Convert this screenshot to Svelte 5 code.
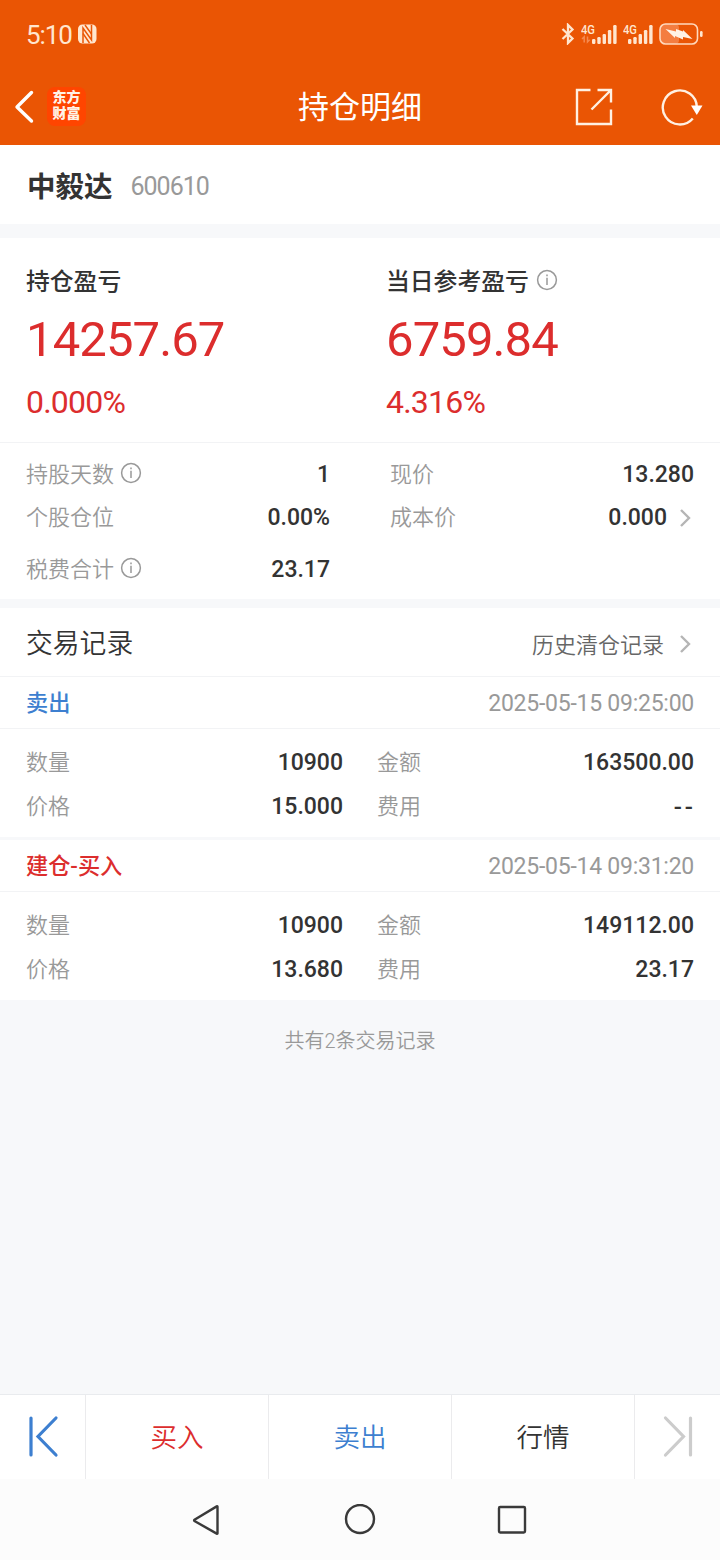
<script>
    let stock = { name: "中毅达", code: "600610" };

    let profits = [
        { label: "持仓盈亏", amount: "14257.67", percent: "0.000%", info: false },
        { label: "当日参考盈亏", amount: "6759.84", percent: "4.316%", info: true }
    ];

    let records = [
        {
            type: "卖出",
            side: "sell",
            time: "2025-05-15 09:25:00",
            count: "10900",
            price: "15.000",
            total: "163500.00",
            fee: "--"
        },
        {
            type: "建仓-买入",
            side: "buy",
            time: "2025-05-14 09:31:20",
            count: "10900",
            price: "13.680",
            total: "149112.00",
            fee: "23.17"
        }
    ];

    const bars = [5, 7, 10, 14, 19];
</script>

{#snippet info()}
    <svg class="info" width="22" height="22" viewBox="0 0 22 22">
        <circle cx="11" cy="11" r="9.4" />
        <path d="M11 8.8V16M11 5.4V7.2" />
    </svg>
{/snippet}

{#snippet chevron()}
    <svg class="chevron" width="12" height="20" viewBox="0 0 12 20">
        <path d="M2 2L10 10L2 18" />
    </svg>
{/snippet}

{#snippet signal(data)}
    <svg class="signal" width={data ? 38 : 32} height="24" viewBox="0 0 {data ? 38 : 32} 24">
        <text x="0" y="12" textLength="14" lengthAdjust="spacingAndGlyphs">4G</text>
        {#if data}
            <path class="data" d="M1 17L3.2 14.8V20.5M6.5 14.5V20L8.7 17.8" />
        {/if}
        {#each bars as h, i}
            <rect x={(data ? 11 : 5) + i * 5.3} y={22 - h} width="3.4" height={h} rx="1.2" />
        {/each}
    </svg>
{/snippet}

<div class="page">
    <header>
        <div class="status">
            <div class="clock">
                <span>5:10</span>
                <svg width="20" height="20" viewBox="0 0 20 20">
                    <rect x="0" y="0.5" width="18.5" height="19" rx="4.5" fill="#ffe6cf" />
                    <path d="M5 19V4L13.5 16V1" fill="none" stroke="#ea5504" stroke-width="1.5" />
                    <path d="M5 9.5L11.500 19M7 1L13.500 10" fill="none" stroke="#ea5504" stroke-width="1.4" />
                </svg>
            </div>
            <div class="device">
                <svg class="bt" width="14" height="22" viewBox="0 0 14 22">
                    <path d="M1.5 6L11.5 15.5L7 20V2L11.5 6.5L1.5 16" />
                </svg>
                {@render signal(true)}
                {@render signal(false)}
                <svg class="battery" width="44" height="22" viewBox="0 0 44 22">
                    <rect x="1" y="1" width="19" height="20" rx="4" fill="#f47d40" />
                    <rect x="1" y="1" width="37.5" height="20" rx="5.5" fill="none" stroke="#ffd9bd" stroke-width="1.6" />
                    <path d="M6.500 6L17 8.500V6L24 8.500V7L33.500 16L24 14V16.500L16 13V15Z" fill="#fff3e6" />
                    <rect x="41" y="8" width="2.600" height="6" rx="1.3" fill="#ffe6cf" />
                </svg>
            </div>
        </div>
        <div class="nav">
            <div class="left">
                <svg width="22" height="34" viewBox="0 0 22 34">
                    <path d="M18.500 2.500L4 17L18.500 31" stroke="#fff" stroke-width="3.4" stroke-linecap="round" stroke-linejoin="round" fill="none" />
                </svg>
                <div class="logo">东方<br />财富</div>
            </div>
            <h1>持仓明细</h1>
            <div class="tools">
                <svg width="38" height="38" viewBox="0 0 38 38">
                    <path d="M15.500 2H2V36H36V21.500M22.500 2H36V14.500M36 2L16.500 21.500" />
                </svg>
                <svg width="42" height="38" viewBox="0 0 42 38">
                    <path d="M31.800 30.400A17 17 0 1 1 35.800 19" />
                    <path class="head" d="M30 17.500H41.500L35.800 27Z" />
                </svg>
            </div>
        </div>
    </header>

    <section class="stock">
        <strong>{stock.name}</strong>
        <span>{stock.code}</span>
    </section>

    <section class="profits">
        {#each profits as item}
            <div class="profit">
                <div class="label">
                    <span>{item.label}</span>
                    {#if item.info}{@render info()}{/if}
                </div>
                <div class="amount">{item.amount}</div>
                <div class="percent">{item.percent}</div>
            </div>
        {/each}
    </section>

    <section class="details">
        <div class="cell"><div class="name"><span>持股天数</span>{@render info()}</div><b>1</b></div>
        <div class="cell"><div class="name"><span>现价</span></div><b>13.280</b></div>
        <div class="cell"><div class="name"><span>个股仓位</span></div><b>0.00%</b></div>
        <div class="cell"><div class="name"><span>成本价</span></div><b>0.000 {@render chevron()}</b></div>
        <div class="cell"><div class="name"><span>税费合计</span>{@render info()}</div><b>23.17</b></div>
    </section>

    <section class="title">
        <h2>交易记录</h2>
        <div class="history"><span>历史清仓记录</span>{@render chevron()}</div>
    </section>

    {#each records as record}
        <section class="record">
            <div class="top">
                <span class={record.side}>{record.type}</span>
                <time>{record.time}</time>
            </div>
            <div class="body">
                <div class="cell"><div class="name"><span>数量</span></div><b>{record.count}</b></div>
                <div class="cell"><div class="name"><span>金额</span></div><b>{record.total}</b></div>
                <div class="cell"><div class="name"><span>价格</span></div><b>{record.price}</b></div>
                <div class="cell">
                    <div class="name"><span>费用</span></div>
                    <b class:empty={record.fee === "--"}>{record.fee}</b>
                </div>
            </div>
        </section>
    {/each}

    <p class="summary">共有{records.length}条交易记录</p>

    <footer>
        <div class="step">
            <svg width="32" height="44" viewBox="0 0 32 44">
                <path d="M4 3V40M29 3L11 21.500L29 40" stroke="#3d7fd0" />
            </svg>
        </div>
        <div class="action buy">买入</div>
        <div class="action sell">卖出</div>
        <div class="action">行情</div>
        <div class="step">
            <svg width="32" height="44" viewBox="0 0 32 44">
                <path d="M28.500 3V40M3.500 3L21.500 21.500L3.500 40" stroke="#ccc" />
            </svg>
        </div>
    </footer>

    <div class="system">
        <svg width="32" height="32" viewBox="0 0 32 32">
            <path d="M25.500 2.800V29.200Q25.500 30 24.700 29.600L2.500 17Q1.700 16.400 2.500 15.800L24.700 2.400Q25.500 2 25.500 2.800Z" />
        </svg>
        <svg width="32" height="32" viewBox="0 0 32 32">
            <circle cx="16" cy="15" r="14" />
        </svg>
        <svg width="32" height="32" viewBox="0 0 32 32">
            <rect x="3" y="3" width="26" height="25.500" rx="1.200" />
        </svg>
    </div>
</div>

<style>
    :global(body) {
        background: #f7f8fa;
    }

    .page {
        display: flex;
        flex-direction: column;
        width: 720px;
        height: 1560px;
        overflow: hidden;
        background: #f7f8fa;
        color: #333;
        font-family: Roboto, "Noto Sans CJK SC", sans-serif;
    }

    svg {
        display: block;
        flex: none;
    }

    section {
        box-sizing: border-box;
        background: #fff;
    }

    header {
        height: 145px;
        background: #ea5504;
        color: #fff;
    }

    .status {
        display: flex;
        justify-content: space-between;
        align-items: center;
        height: 68px;
        padding: 0 17px 0 26px;
    }

    .clock {
        display: flex;
        align-items: center;
        gap: 6px;
        color: #ffe6cf;
        font-size: 26px;
        letter-spacing: -1.1px;
    }

    .clock span {
        padding-top: 2px;
    }

    .device {
        display: flex;
        align-items: center;
    }

    .bt {
        margin-right: 6px;
        fill: none;
        stroke: #ffe6cf;
        stroke-width: 2.3;
    }

    .signal {
        margin-right: 4px;
        fill: #ffe6cf;
        font-size: 13px;
        font-weight: 500;
    }

    .signal .data {
        fill: none;
        stroke: #f58a50;
        stroke-width: 1.5;
    }

    .nav {
        display: grid;
        grid-template-columns: 200px 1fr 200px;
        align-items: center;
        height: 77px;
    }

    .left {
        display: flex;
        align-items: center;
        gap: 12px;
        padding-left: 13px;
    }

    .logo {
        width: 39px;
        height: 37px;
        padding-top: 2px;
        border-radius: 8px;
        background: #ff4500;
        color: #fff3e6;
        font-size: 14px;
        font-weight: 900;
        line-height: 16px;
        text-align: center;
    }

    h1 {
        margin: 0;
        padding-top: 3px;
        font-size: 31px;
        font-weight: 400;
        line-height: 40px;
        text-align: center;
    }

    .tools {
        display: flex;
        justify-content: flex-end;
        gap: 48px;
        padding-right: 17px;
    }

    .tools path {
        fill: none;
        stroke: #fff0e2;
        stroke-width: 2.4;
    }

    .tools .head {
        fill: #fff;
        stroke: none;
    }

    .stock {
        display: flex;
        align-items: center;
        gap: 18px;
        height: 79px;
        margin-bottom: 14px;
        padding: 0 26px 0 27px;
    }

    .stock strong {
        padding-bottom: 1px;
        font-size: 28.5px;
        font-weight: 700;
    }

    .stock span {
        padding-top: 3px;
        color: #999;
        font-size: 25px;
        letter-spacing: -1px;
    }

    .profits {
        display: grid;
        grid-template-columns: 360px 360px;
        height: 205px;
        padding-top: 26px;
        border-bottom: 1px solid #f2f3f5;
    }

    .profit {
        padding-left: 26px;
    }

    .label {
        display: flex;
        align-items: center;
        gap: 7px;
        height: 32px;
        font-size: 23.8px;
        font-weight: 500;
    }

    .label span {
        padding-bottom: 1px;
    }

    .name span {
        padding-bottom: 3px;
    }

    .info {
        fill: none;
        stroke: #999;
        stroke-width: 1.5;
    }

    .amount {
        height: 60px;
        margin-top: 14px;
        color: #dc2d2d;
        font-size: 49px;
        line-height: 60px;
        letter-spacing: -0.9px;
    }

    .percent {
        height: 40px;
        margin-top: 12px;
        color: #dc2d2d;
        font-size: 32px;
        line-height: 40px;
        letter-spacing: -0.8px;
    }

    .details {
        display: grid;
        grid-template-columns: 304px 304px;
        grid-template-rows: 44px 43px 60px;
        column-gap: 60px;
        height: 156px;
        margin-bottom: 9px;
        padding: 9px 26px 0;
    }

    .cell {
        display: flex;
        justify-content: space-between;
        align-items: center;
        color: #999;
        font-size: 22px;
        font-weight: 350;
    }

    .name,
    .cell b {
        display: flex;
        align-items: center;
        gap: 6px;
    }

    .name {
        padding-bottom: 2px;
    }

    .cell b {
        gap: 12px;
        color: #333;
        font-size: 23px;
        font-weight: 500;
    }

    .body .cell b {
        padding-top: 1px;
    }

    .cell .empty {
        font-size: 24px;
        letter-spacing: 3px;
        margin-right: -2px;
    }

    .chevron {
        margin-right: 3px;
        fill: none;
        stroke: #b5b5b5;
        stroke-width: 2.4;
    }

    .title {
        display: flex;
        justify-content: space-between;
        align-items: center;
        height: 69px;
        padding: 0 26px;
        border-bottom: 1px solid #f2f3f5;
    }

    h2 {
        margin: 0;
        padding-bottom: 2px;
        font-size: 26.8px;
        font-weight: 350;
    }

    .history {
        display: flex;
        align-items: center;
        gap: 15px;
        padding-top: 4px;
        color: #666;
        font-size: 22px;
        font-weight: 350;
    }

    .history span {
        padding-bottom: 3px;
    }

    .record + .record {
        margin-top: 3px;
    }

    .top {
        display: flex;
        justify-content: space-between;
        align-items: center;
        height: 51px;
        padding: 0 26px;
        border-bottom: 1px solid #f2f3f5;
        font-size: 22px;
        font-weight: 500;
    }

    .top span {
        padding-bottom: 3px;
        font-size: 22.2px;
    }

    .top time {
        padding-top: 2px;
        color: #999;
        font-size: 23px;
        font-weight: 400;
        letter-spacing: -0.25px;
    }

    .body {
        display: grid;
        grid-template-columns: 317px 317px;
        grid-template-rows: 44px 44px;
        column-gap: 34px;
        height: 97px;
        padding: 11px 26px 0;
    }

    .buy {
        color: #dc2d2d;
    }

    .sell {
        color: #3d7fd0;
    }

    .summary {
        flex: 1;
        margin: 0;
        padding-top: 26px;
        color: #999;
        font-size: 20px;
        font-weight: 350;
        line-height: 30px;
        text-align: center;
    }

    footer {
        display: grid;
        grid-template-columns: 85px 183px 183px 183px 86px;
        height: 84px;
        border-top: 1px solid #e9ebee;
        background: #fff;
    }

    .step,
    .action {
        display: flex;
        justify-content: center;
        align-items: center;
    }

    .action {
        box-sizing: border-box;
        padding-bottom: 4px;
        border-left: 1px solid #ebebed;
        font-size: 26.5px;
        font-weight: 350;
    }

    .action + .step {
        border-left: 1px solid #ebebed;
    }

    .step path {
        fill: none;
        stroke-width: 3.2;
        stroke-linecap: round;
    }

    .system {
        display: flex;
        justify-content: center;
        align-items: center;
        gap: 120px;
        height: 81px;
        background: #fcfcfc;
    }

    .system svg {
        fill: none;
        stroke: #3a3a3a;
        stroke-width: 2.4;
    }
</style>
